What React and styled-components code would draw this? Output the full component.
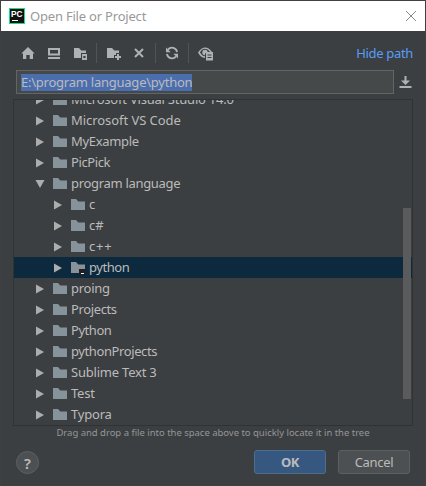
import React from 'react';
import styled, { createGlobalStyle } from 'styled-components';

const Global = createGlobalStyle`
  * { box-sizing: border-box; }
  body { margin: 0; background: #3c3f41; overflow: hidden; }
`;

const Dialog = styled.div`
  width: 426px;
  height: 486px;
  display: flex;
  flex-direction: column;
  background: #3c3f41;
  border: 1px solid #423f41;
  color: #bbbbbb;
  font: 13px/21px "Noto Sans", "Noto Sans CJK SC", sans-serif;
  white-space: pre;
  overflow: hidden;
`;

const TitleBar = styled.header`
  height: 30px;
  flex: none;
  display: flex;
  align-items: center;
  padding: 0 9px 0 8px;
  background: #fff;
  color: #999;
  svg:last-child { margin-left: auto; }
`;

const Label = styled.span`
  letter-spacing: ${(p) => p.$spacing || 0}px;
`;

const Title = styled(Label)`
  margin-left: 5px;
`;

const Toolbar = styled.div`
  height: 39px;
  flex: none;
  display: flex;
  align-items: center;
  padding: 5px 12px 0 19px;
`;

const ToolIcon = styled.svg`
  width: 16px;
  height: 16px;
  flex: none;
  margin-right: ${(p) => p.$gap}px;
  fill: #afb1b3;
`;

const Separator = styled.div`
  width: 1px;
  height: 20px;
  margin-right: ${(p) => p.$gap}px;
  background: #515456;
`;

const PathLink = styled(Label)`
  margin-left: auto;
  color: #589df6;
`;

const PathRow = styled.div`
  height: 24px;
  flex: none;
  display: flex;
  align-items: center;
  padding: 0 13px 0 15px;
  justify-content: space-between;
`;

const PathField = styled.div`
  width: 378px;
  height: 24px;
  display: flex;
  align-items: center;
  padding-left: 4px;
  border: 1px solid #646464;
  background: #45494a;
`;

const Selection = styled(Label)`
  width: 171px;
  height: 17px;
  line-height: 16px;
  background: #4b6eaf;
`;

const Tree = styled.div`
  width: 400px;
  height: 327px;
  flex: none;
  margin: 5px 0 0 12px;
  border: 1px solid #303234;
  overflow: hidden;
  display: grid;
  grid-template-columns: minmax(0, 1fr);
  position: relative;
`;

const Rows = styled.div`
  margin-top: -11px;
`;

const Row = styled.div`
  height: 21px;
  display: flex;
  align-items: center;
  padding-left: ${(p) => 22 + p.$level * 18}px;
  background: ${(p) => (p.$selected ? '#0d293e' : 'transparent')};
`;

const Arrow = styled.svg`
  width: 8px;
  height: 10px;
  flex: none;
  fill: #adadad;
  transform: ${(p) => (p.$open ? 'rotate(90deg)' : 'none')};
`;

const Folder = styled.svg`
  width: 16px;
  height: 14px;
  flex: none;
  margin: 0 3px 0 8px;
`;

const ScrollThumb = styled.div`
  position: absolute;
  right: 1px;
  top: 108px;
  width: 8px;
  height: 191px;
  background: #595b5c;
`;

const Hint = styled(Label)`
  height: 14px;
  flex: none;
  align-self: center;
  line-height: 14px;
  font-size: 9.5px;
  color: #949697;
`;

const Footer = styled.footer`
  display: flex;
  align-items: flex-end;
  height: 24px;
  margin-top: 10px;
  padding: 0 15px;
`;

const Help = styled.button`
  width: 23px;
  height: 23px;
  margin-right: auto;
  padding: 0;
  border: 1px solid #5e6162;
  border-radius: 50%;
  background: #4c5052;
  color: #bbb;
  font: 600 15px/20px "Noto Sans", sans-serif;
`;

const Button = styled.button`
  width: 72px;
  height: 24px;
  margin-left: 12px;
  padding: 0;
  border: 1px solid ${(p) => (p.$primary ? '#4c708c' : '#5e6060')};
  border-radius: 3px;
  background: ${(p) => (p.$primary ? '#365880' : '#4c5052')};
  color: #bbb;
  font: ${(p) => (p.$primary ? 'bold' : 'normal')} 13px/20px "Noto Sans", sans-serif;
  letter-spacing: ${(p) => (p.$primary ? '-0.5px' : '-0.3px')};
`;

const items = [
  { name: 'Microsoft Visual Studio 14.0', spacing: -0.21 },
  { name: 'Microsoft VS Code', spacing: -0.06 },
  { name: 'MyExample', spacing: -0.33 },
  { name: 'PicPick', spacing: -0.4 },
  { name: 'program language', spacing: -0.31, open: true },
  { name: 'c', level: 1 },
  { name: 'c#', level: 1 },
  { name: 'c++', level: 1, spacing: 0.8 },
  { name: 'python', level: 1, spacing: -0.45, selected: true },
  { name: 'proing', spacing: -0.25 },
  { name: 'Projects', spacing: -0.37 },
  { name: 'Python', spacing: -0.45 },
  { name: 'pythonProjects', spacing: -0.4 },
  { name: 'Sublime Text 3', spacing: -0.21 },
  { name: 'Test', spacing: -0.25 },
  { name: 'Typora', spacing: -0.2 },
];

function TreeRow({ name, level = 0, spacing = 0, open = false, selected = false }) {
  return (
    <Row $level={level} $selected={selected}>
      <Arrow $open={open} viewBox="0 0 8 10"><path d="M0 .5 8 5 0 9.5Z" /></Arrow>
      <Folder viewBox="0 0 16 14">
        <path d="M1 1H6L8.3 3.5H15V12H1Z" fill="#87939a" />
        {selected && <path d="M9 8H15V14H9Z" fill="#231f20" />}
        {selected && <path d="M11 12H14V13H11Z" fill="#fff" />}
      </Folder>
      <Label $spacing={spacing}>{name}</Label>
    </Row>
  );
}

export default function App() {
  return (
    <>
      <Global />
      <Dialog>
        <TitleBar>
          <svg width="16" height="16" viewBox="0 0 16 16">
            <path d="M0 0H16V16H0Z" fill="#21d789" />
            <path d="M1 1H15V15H1Z" fill="#111" />
            <text x="2" y="9" fill="#fff" fontSize="8.5" fontWeight="bold" fontFamily="Liberation Sans" textLength="11.5" lengthAdjust="spacingAndGlyphs">PC</text>
            <path d="M3 12H9V13H3Z" fill="#fff" />
          </svg>
          <Title $spacing={-0.2}>Open File or Project</Title>
          <svg width="10" height="10" viewBox="0 0 10 10" stroke="#888" fill="none"><path d="M0 0 10 10M10 0 0 10" /></svg>
        </TitleBar>
        <Toolbar>
          <ToolIcon $gap={10} viewBox="0 0 16 16"><path d="M8 2 14.7 8.5H13V14H9.7V10H6.3V14H3V8.5H1.3Z" /></ToolIcon>
          <ToolIcon $gap={10} viewBox="0 0 16 16"><path fillRule="evenodd" d="M2 3H14V10.5H2ZM4 5V8.5H12V5ZM2 12H14V14H2Z" /></ToolIcon>
          <ToolIcon $gap={8} viewBox="0 0 16 16"><path fillRule="evenodd" d="M2 3H7L9.3 5.5H14V8H9V13H2ZM10 9H15V15H10ZM11.3 11V13H13.5V11Z" /></ToolIcon>
          <Separator $gap={8} />
          <ToolIcon $gap={10} viewBox="0 0 16 16"><path d="M2 3H7L9.3 5.5H14V8H11V10H9V13H2ZM12 9H14V11H16V13H14V15H12V13H10V11H12Z" /></ToolIcon>
          <ToolIcon $gap={8} viewBox="0 0 16 16"><path d="M4 4 12 12M12 4 4 12" stroke="#afb1b3" strokeWidth="2" /></ToolIcon>
          <Separator $gap={8} />
          <ToolIcon $gap={8} viewBox="0 0 16 16">
            <path d="M13.1 7A5.2 5.2 0 0 0 4 4.6M2.9 9A5.2 5.2 0 0 0 12 11.4" fill="none" stroke="#afb1b3" strokeWidth="1.8" />
            <path d="M2 2.5V7.2H6.7ZM14 13.5V8.8H9.3Z" />
          </ToolIcon>
          <Separator $gap={9} />
          <ToolIcon $gap={0} viewBox="0 0 16 16">
            <path fillRule="evenodd" d="M0 7.5Q7 -2 14 7H12Q10 3.8 7 3.8 3.8 3.8 2 7.5 4 11.2 7 11.3V13Q2.5 12.5 0 7.5Z" />
            <path d="M7 4.8A2.7 2.7 0 1 0 7 10.2V8.3H9.7V7.5A2.7 2.7 0 0 0 7 4.8Z" />
            <path fillRule="evenodd" d="M8 7H15V15.5H8ZM9.5 9.5V10.5H13.5V9.5ZM9.5 12V13H13.5V12Z" />
          </ToolIcon>
          <PathLink $spacing={-0.33}>Hide path</PathLink>
        </Toolbar>
        <PathRow>
          <PathField><Selection $spacing={-0.24}>E:\program language\python</Selection></PathField>
          <svg width="13" height="14" viewBox="0 0 13 14" fill="#afb1b3"><path d="M5.5 1H7.5V5.5H11L6.5 10 2 5.5H5.5ZM.5 11H12.5V13H.5Z" /></svg>
        </PathRow>
        <Tree>
          <Rows>
            {items.map((item) => <TreeRow key={item.name} {...item} />)}
          </Rows>
          <ScrollThumb />
        </Tree>
        <Hint $spacing={-0.02}>Drag and drop a file into the space above to quickly locate it in the tree</Hint>
        <Footer>
          <Help>?</Help>
          <Button $primary>OK</Button>
          <Button>Cancel</Button>
        </Footer>
      </Dialog>
    </>
  );
}
